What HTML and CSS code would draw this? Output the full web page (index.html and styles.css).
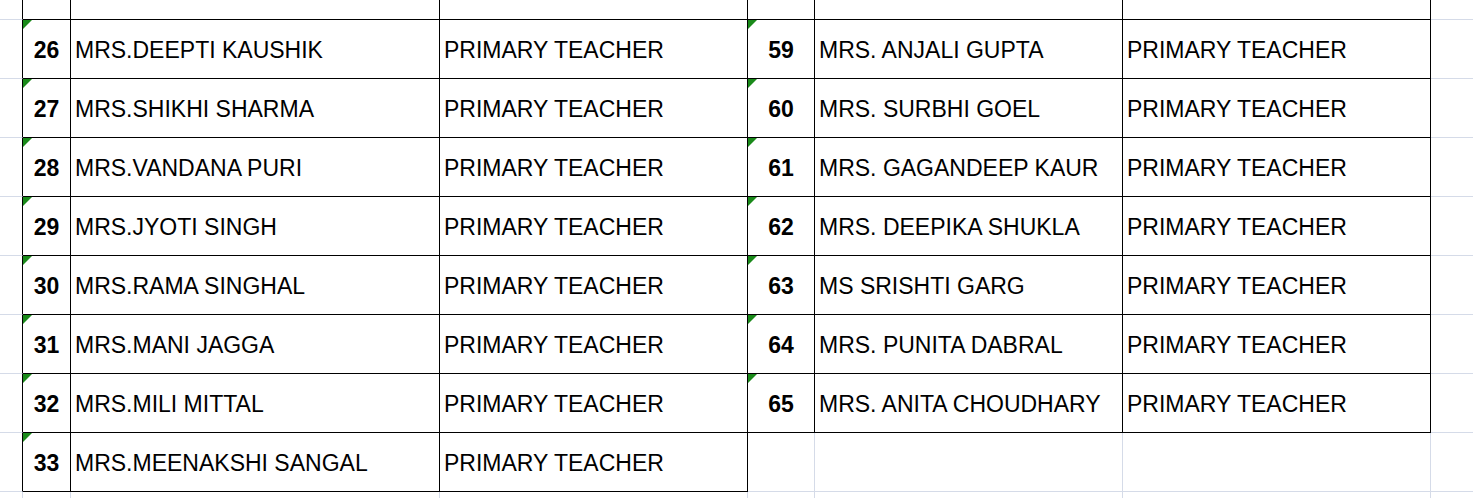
FILE: index.html
```html
<!DOCTYPE html>
<html lang="en">
<head>
    <meta charset="UTF-8">
    <title>Staff List</title>
    <link rel="stylesheet" href="styles.css">
</head>
<body>
    <div class="sheet">
        <!-- linha parcial do topo -->
        <div class="c r"></div>
        <div class="c t"></div><div class="c t"></div><div class="c t"></div>
        <div class="c t"></div><div class="c t"></div><div class="c t"></div>
        <div class="c"></div>

        <div class="c r"></div>
        <div class="c t num tri">26</div><div class="c t txt">MRS.DEEPTI KAUSHIK</div><div class="c t txt">PRIMARY TEACHER</div>
        <div class="c t num tri">59</div><div class="c t txt">MRS. ANJALI GUPTA</div><div class="c t txt">PRIMARY TEACHER</div>
        <div class="c"></div>

        <div class="c r"></div>
        <div class="c t num tri">27</div><div class="c t txt">MRS.SHIKHI SHARMA</div><div class="c t txt">PRIMARY TEACHER</div>
        <div class="c t num tri">60</div><div class="c t txt">MRS. SURBHI GOEL</div><div class="c t txt">PRIMARY TEACHER</div>
        <div class="c"></div>

        <div class="c r"></div>
        <div class="c t num tri">28</div><div class="c t txt">MRS.VANDANA PURI</div><div class="c t txt">PRIMARY TEACHER</div>
        <div class="c t num tri">61</div><div class="c t txt">MRS. GAGANDEEP KAUR</div><div class="c t txt">PRIMARY TEACHER</div>
        <div class="c"></div>

        <div class="c r"></div>
        <div class="c t num tri">29</div><div class="c t txt">MRS.JYOTI SINGH</div><div class="c t txt">PRIMARY TEACHER</div>
        <div class="c t num tri">62</div><div class="c t txt">MRS. DEEPIKA SHUKLA</div><div class="c t txt">PRIMARY TEACHER</div>
        <div class="c"></div>

        <div class="c r"></div>
        <div class="c t num tri">30</div><div class="c t txt">MRS.RAMA SINGHAL</div><div class="c t txt">PRIMARY TEACHER</div>
        <div class="c t num tri">63</div><div class="c t txt">MS SRISHTI GARG</div><div class="c t txt">PRIMARY TEACHER</div>
        <div class="c"></div>

        <div class="c r"></div>
        <div class="c t num tri">31</div><div class="c t txt">MRS.MANI JAGGA</div><div class="c t txt">PRIMARY TEACHER</div>
        <div class="c t num tri">64</div><div class="c t txt">MRS. PUNITA DABRAL</div><div class="c t txt">PRIMARY TEACHER</div>
        <div class="c"></div>

        <div class="c r"></div>
        <div class="c t num tri">32</div><div class="c t txt">MRS.MILI MITTAL</div><div class="c t txt">PRIMARY TEACHER</div>
        <div class="c t num tri">65</div><div class="c t txt">MRS. ANITA CHOUDHARY</div><div class="c t txt">PRIMARY TEACHER</div>
        <div class="c"></div>

        <div class="c r"></div>
        <div class="c t num tri">33</div><div class="c t txt">MRS.MEENAKSHI SANGAL</div><div class="c t txt">PRIMARY TEACHER</div>
        <div class="c"></div><div class="c"></div><div class="c"></div>
        <div class="c"></div>

        <!-- resto da planilha -->
        <div class="c"></div><div class="c"></div><div class="c"></div><div class="c"></div>
        <div class="c"></div><div class="c"></div><div class="c"></div><div class="c"></div>
    </div>
</body>
</html>
```
FILE: styles.css
```css
* {
    margin: 0;
    padding: 0;
    box-sizing: border-box;
}

body {
    background-color: #ffffff;
    overflow: hidden;
    font-family: "Liberation Sans", Arial, sans-serif;
    color: #000000;
}

/* Grade da planilha */
.sheet {
    display: grid;
    grid-template-columns: 23px 48px 369px 308px 67px 308px 308px 80px;
    grid-template-rows: 20px repeat(8, 59px) 30px;
}

.c {
    position: relative;
    border-right: 1px solid #d5dbe8;
    border-bottom: 1px solid #d5dbe8;
    display: flex;
    align-items: center;
    font-size: 23px;
    padding-top: 3px;
    white-space: nowrap;
}

.c.r {
    border-right-color: #000000;
}

.c.t {
    border-right-color: #000000;
    border-bottom-color: #000000;
}

.num {
    justify-content: center;
    font-weight: bold;
}

.txt {
    padding-left: 4px;
}

/* indicador verde de numero como texto */
.tri::before {
    content: "";
    position: absolute;
    top: 0;
    left: 0;
    border-top: 9px solid #1a8a1a;
    border-right: 9px solid transparent;
}
```
